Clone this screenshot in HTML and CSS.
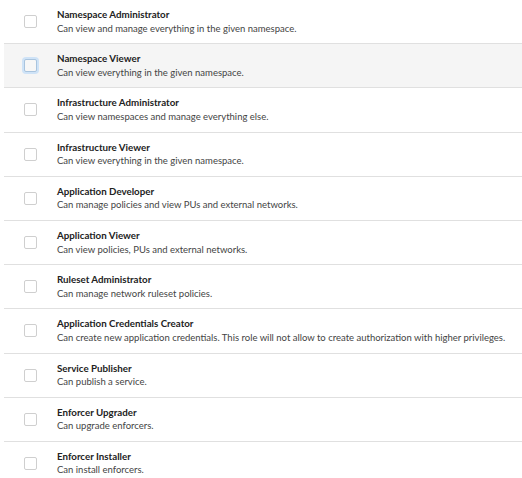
FILE: index.html
```html
<!DOCTYPE html>
<html>
<head>
<meta charset="utf-8">
<link rel="stylesheet" href="styles.css">
</head>
<body>
<ul class="roles">
  <li class="role"><span class="check"></span><div class="text"><div class="title">Namespace Administrator</div><div class="desc">Can view and manage everything in the given namespace.</div></div></li>
  <li class="role hover"><span class="check focus"></span><div class="text"><div class="title">Namespace Viewer</div><div class="desc">Can view everything in the given namespace.</div></div></li>
  <li class="role"><span class="check"></span><div class="text"><div class="title">Infrastructure Administrator</div><div class="desc">Can view namespaces and manage everything else.</div></div></li>
  <li class="role"><span class="check"></span><div class="text"><div class="title">Infrastructure Viewer</div><div class="desc">Can view everything in the given namespace.</div></div></li>
  <li class="role"><span class="check"></span><div class="text"><div class="title">Application Developer</div><div class="desc">Can manage policies and view PUs and external networks.</div></div></li>
  <li class="role"><span class="check"></span><div class="text"><div class="title">Application Viewer</div><div class="desc">Can view policies, PUs and external networks.</div></div></li>
  <li class="role"><span class="check"></span><div class="text"><div class="title">Ruleset Administrator</div><div class="desc">Can manage network ruleset policies.</div></div></li>
  <li class="role"><span class="check"></span><div class="text"><div class="title">Application Credentials Creator</div><div class="desc">Can create new application credentials. This role will not allow to create authorization with higher privileges.</div></div></li>
  <li class="role"><span class="check"></span><div class="text"><div class="title">Service Publisher</div><div class="desc">Can publish a service.</div></div></li>
  <li class="role"><span class="check"></span><div class="text"><div class="title">Enforcer Upgrader</div><div class="desc">Can upgrade enforcers.</div></div></li>
  <li class="role last"><span class="check"></span><div class="text"><div class="title">Enforcer Installer</div><div class="desc">Can install enforcers.</div></div></li>
</ul>
</body>
</html>
```
FILE: styles.css
```css
html, body {
  margin: 0;
  padding: 0;
  background: #fff;
  overflow: hidden;
}
body {
  font-family: Lato, "Liberation Sans", sans-serif;
}
.roles {
  list-style: none;
  margin: 0 0 0 4px;
  padding: 0;
}
.role {
  display: flex;
  align-items: center;
  padding: 8px 0;
  border-bottom: 1px solid #e0e0e0;
}
.role.last {
  border-bottom: none;
}
.role.hover {
  background: #f5f5f5;
}
.check {
  box-sizing: border-box;
  width: 13px;
  height: 13px;
  margin-left: 20px;
  margin-right: 20px;
  border: 1px solid #cfcfcf;
  border-radius: 2px;
  background: #fff;
  flex: none;
}
.check.focus {
  border-color: #a9c4de;
  box-shadow: 0 0 0 2px #cfe3f7;
  background: #f7f7f7;
}
.text {
  display: flex;
  flex-direction: column;
}
.title {
  font-size: 9.75px;
  font-weight: bold;
  line-height: 13.6px;
  color: #222;
}
.desc {
  font-size: 9.5px;
  line-height: 13.6px;
  color: #444;
  white-space: nowrap;
}
```
